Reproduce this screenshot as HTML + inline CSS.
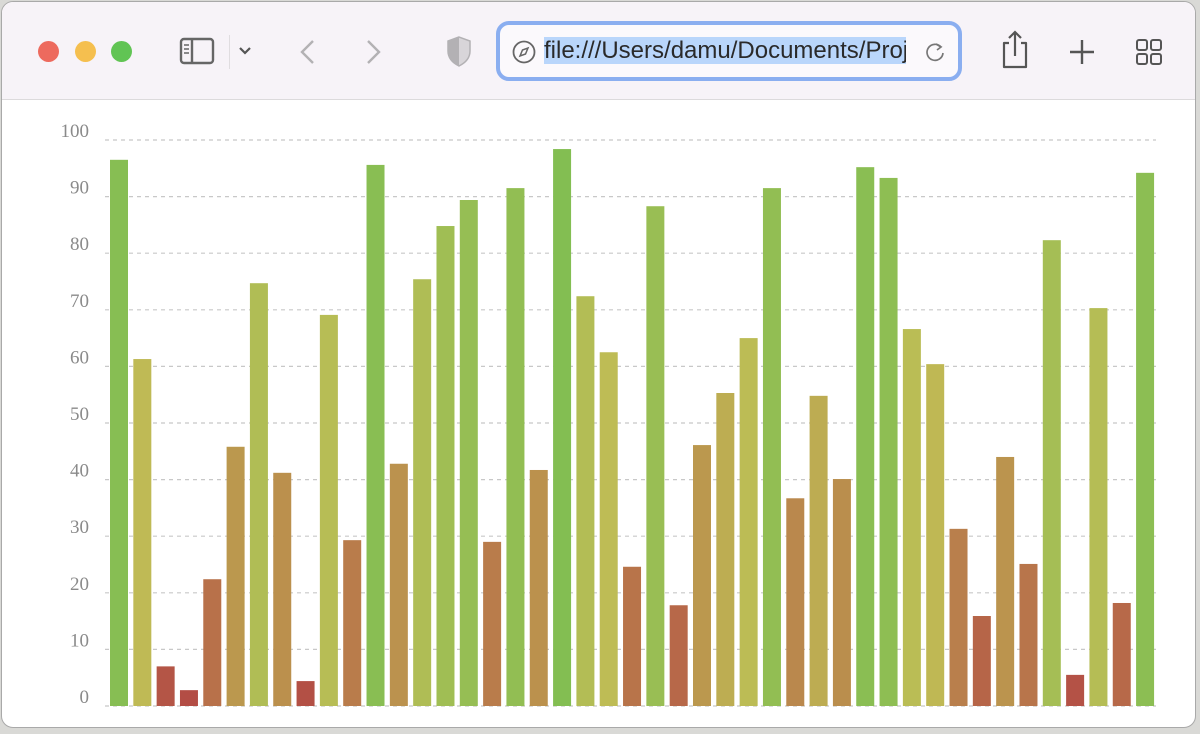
<!DOCTYPE html>
<html><head><meta charset="utf-8"><style>
html,body{margin:0;padding:0;width:1200px;height:734px;overflow:hidden;background:#d9d9d6;}
.win{position:absolute;left:1px;top:1px;width:1195px;height:727px;background:#fff;border-radius:12px;border:1px solid #a9a9a9;overflow:hidden;box-sizing:border-box;}
.bar{position:absolute;left:0;top:0;width:1195px;height:97px;background:#f7f3f8;border-bottom:1px solid #dcdadc;}
.tl{position:absolute;top:39px;width:21px;height:21px;border-radius:50%;}
.url{position:absolute;left:494px;top:19px;width:466px;height:60px;box-sizing:border-box;border:4px solid #8aaef0;border-radius:13px;background:#fbf9fc;}
.url .t{position:absolute;left:44px;top:12px;height:28px;width:362px;overflow:hidden;white-space:nowrap;font:24px "Liberation Sans",sans-serif;color:#2a2a2a;line-height:28px;}
.url .t span{background:#b9d6fb;}
svg{position:absolute;}
</style></head><body>
<div class="win">
<div class="bar">
<div class="tl" style="left:36px;background:#ed6a5e;"></div>
<div class="tl" style="left:73px;background:#f5bf4f;"></div>
<div class="tl" style="left:109px;background:#61c454;"></div>
<svg style="left:177px;top:35px" width="38" height="28" viewBox="0 0 38 28"><rect x="2" y="2" width="32" height="24" rx="3" fill="none" stroke="#666" stroke-width="2.4"/><line x1="13" y1="2" x2="13" y2="26" stroke="#666" stroke-width="2.4"/><path d="M5 8h5M5 12h5M5 16h5" stroke="#666" stroke-width="1.5"/></svg>
<div style="position:absolute;left:227px;top:33px;width:1px;height:34px;background:#e0dde0"></div>
<svg style="left:235px;top:43px" width="16" height="12"><path d="M3 3l5 5 5-5" fill="none" stroke="#555" stroke-width="2.2"/></svg>
<svg style="left:294px;top:35px" width="24" height="30"><path d="M17 4L6 15l11 11" fill="none" stroke="#b3b1b4" stroke-width="2.4"/></svg>
<svg style="left:359px;top:35px" width="24" height="30"><path d="M7 4l11 11-11 11" fill="none" stroke="#b3b1b4" stroke-width="2.4"/></svg>
<svg style="left:443px;top:33px" width="28" height="34"><path d="M14 2L3 6v10c0 7 5 12 11 15 6-3 11-8 11-15V6z" fill="#d8d5d9" stroke="#b3b1b4" stroke-width="1.5"/><path d="M14 2L3 6v10c0 7 5 12 11 15z" fill="#b3b1b4"/></svg>
<div class="url">
<svg style="left:11px;top:14px" width="26" height="26"><circle cx="13" cy="13" r="10.5" fill="none" stroke="#666" stroke-width="1.8"/><path d="M17 9l-2.5 6-5.5 2 2.5-6z" fill="none" stroke="#666" stroke-width="1.5"/></svg>
<div class="t"><span>file:///Users/damu/Documents/Project</span></div>
<svg style="left:424px;top:15px" width="24" height="26"><path d="M17 7a8 8 0 1 0 2 6" fill="none" stroke="#777" stroke-width="1.7"/><path d="M12 4l5 3-4 3" fill="none" stroke="#777" stroke-width="1.7"/></svg>
</div>
<svg style="left:997px;top:27px" width="32" height="42"><path d="M10 14H5v24h22V14h-5" fill="none" stroke="#555" stroke-width="2.2" stroke-linejoin="round"/><path d="M16 27V3M10 9l6-6 6 6" fill="none" stroke="#555" stroke-width="2.2"/></svg>
<svg style="left:1065px;top:35px" width="30" height="30"><path d="M15 3v24M3 15h24" stroke="#555" stroke-width="2.4"/></svg>
<svg style="left:1132px;top:35px" width="30" height="30"><rect x="3" y="3" width="10" height="10" rx="2" fill="none" stroke="#555" stroke-width="2"/><rect x="17" y="3" width="10" height="10" rx="2" fill="none" stroke="#555" stroke-width="2"/><rect x="3" y="17" width="10" height="10" rx="2" fill="none" stroke="#555" stroke-width="2"/><rect x="17" y="17" width="10" height="10" rx="2" fill="none" stroke="#555" stroke-width="2"/></svg>
</div>
<svg id="c" style="left:-2px;top:-2px" width="1200" height="734"></svg>
</div>
<script>
var v=[96.5,61.3,7,2.8,22.4,45.8,74.7,41.2,4.4,69.1,29.3,95.6,42.8,75.4,84.8,89.4,29,91.5,41.7,98.4,72.4,62.5,24.6,88.3,17.8,46.1,55.3,65,91.5,36.7,54.8,40.1,95.2,93.3,66.6,60.4,31.3,15.9,44,25.1,82.3,5.5,70.3,18.2,94.2];
var stops=[[0,178,72,68],[22,184,112,74],[45,187,150,78],[62,191,188,85],[80,170,190,85],[100,128,190,82]];
function col(x){for(var i=0;i<stops.length-1;i++){var a=stops[i],b=stops[i+1];if(x<=b[0]){var t=(x-a[0])/(b[0]-a[0]);return 'rgb('+[1,2,3].map(function(k){return Math.round(a[k]+(b[k]-a[k])*t)}).join(',')+')';}}}
var s='',base=706,sc=5.66;
for(var k=0;k<=10;k++){var y=base-k*10*sc;s+='<line x1="105" x2="1156" y1="'+y+'" y2="'+y+'" stroke="#c8c8c8" stroke-width="1.2" stroke-dasharray="4,4"/>';s+='<text x="89" y="'+(y-3)+'" text-anchor="end" font-family="Liberation Serif,serif" font-size="19" fill="#8a8a8a">'+(k*10)+'</text>';}
for(var i=0;i<v.length;i++){var x=110+i*23.32,h=v[i]*sc;s+='<rect x="'+x+'" y="'+(base-h)+'" width="18" height="'+h+'" fill="'+col(v[i])+'"/>';}
document.getElementById('c').innerHTML=s;
</script>
</body></html>
